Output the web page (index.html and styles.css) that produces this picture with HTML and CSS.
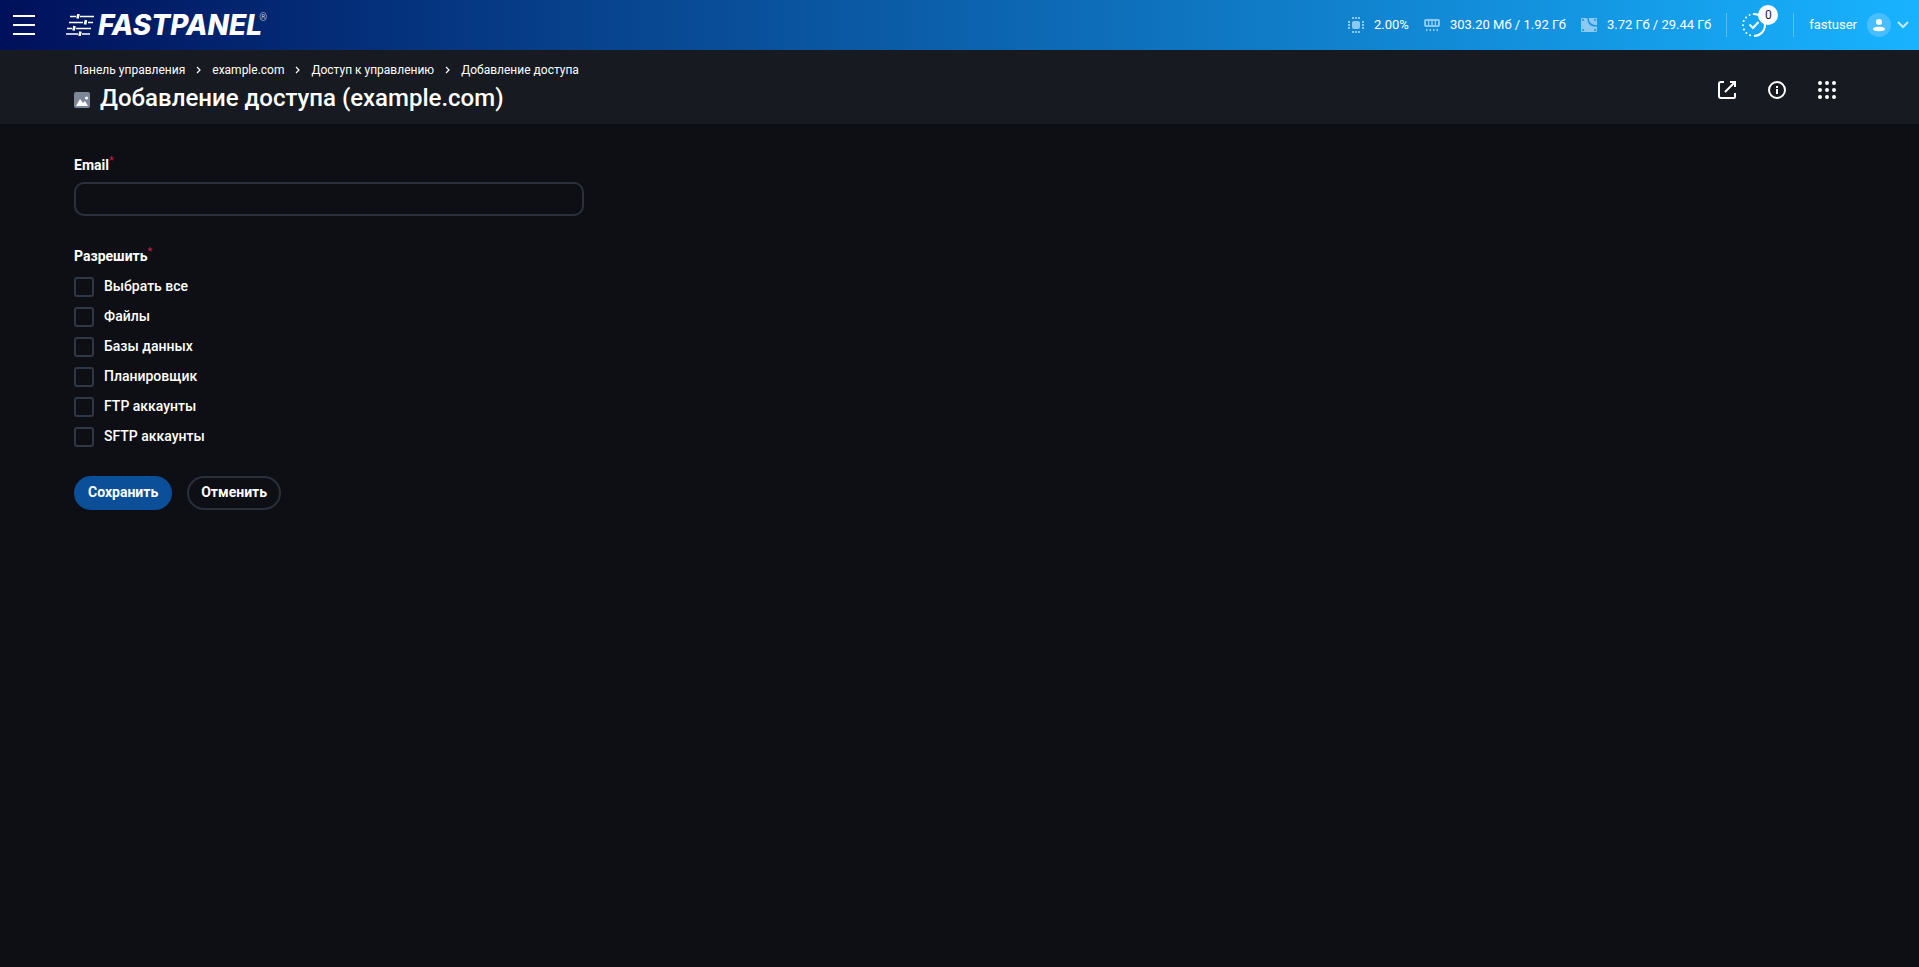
FILE: index.html
```html
<!DOCTYPE html>
<html lang="ru">
<head>
    <meta charset="utf-8">
    <title>Добавление доступа (example.com)</title>
    <link rel="stylesheet" href="styles.css">
</head>
<body>
    <header class="topbar">
        <button class="icon-button" type="button" aria-label="Меню">
            <svg width="22" height="20" viewBox="0 0 22 20" fill="#fff">
                <path d="M0 0h22v2H0zM0 9h22v2H0zM0 18h22v2H0z"/>
            </svg>
        </button>
        <a class="logo" href="#" aria-label="FASTPANEL">
            <svg width="28" height="22" viewBox="0 0 28 22" stroke="#fff" stroke-width="1.6" fill="none">
                <path d="M4 2.5h6M14 2.5h14M3 8.5h14M22 8.5h5M1 14.5h5M10 14.5h15M0 20h12M16 20h8"/>
                <path stroke-width="2.6" d="M12.5 0l-1 4.500M20 6l-1 4.500M8.500 12l-1 4.500M14.500 17.500l-1 4.500"/>
            </svg>
            <span class="logo-text">FASTPANEL</span>
            <span class="logo-reg">®</span>
        </a>

        <div class="stats">
            <div class="stat">
                <svg width="16" height="16" viewBox="0 0 16 16" fill="#8ac9f1">
                    <rect x="4" y="4" width="8" height="8" rx="2"/>
                    <path d="M4 0h2v2H4zM7 0h2v2H7zM10 0h2v2h-2zM4 14h2v2H4zM7 14h2v2H7zM10 14h2v2h-2zM0 4h2v2H0zM0 7h2v2H0zM0 10h2v2H0zM14 4h2v2h-2zM14 7h2v2h-2zM14 10h2v2h-2z"/>
                </svg>
                <span>2.00%</span>
            </div>
            <div class="stat">
                <svg width="16" height="16" viewBox="0 0 16 16" fill="#8ac9f1">
                    <path fill-rule="evenodd" d="M2 2h12a2 2 0 0 1 2 2v4a2 2 0 0 1-2 2H2a2 2 0 0 1-2-2V4a2 2 0 0 1 2-2zM2 4v4h2V4zM5.300 4v4h2V4zM8.700 4v4h2V4zM12 4v4h2V4z"/>
                    <path d="M2 12h1.500v2H2zM5.500 12H7v2H5.500zM9 12h1.500v2H9zM12.500 12H14v2h-1.500z"/>
                </svg>
                <span>303.20 Мб / 1.92 Гб</span>
            </div>
            <div class="stat">
                <svg width="16" height="16" viewBox="0 0 16 16">
                    <rect y="1" width="16" height="14" rx="1" fill="#8ac9f1"/>
                    <path d="M7 1c0 5 3 8 9 8" fill="none" stroke="#1595e0" stroke-width="1.5"/>
                    <g fill="#1595e0">
                        <circle cx="2" cy="3" r="1"/>
                        <circle cx="14" cy="3" r="1"/>
                        <circle cx="2" cy="13" r="1"/>
                        <circle cx="14" cy="13" r="1"/>
                    </g>
                </svg>
                <span>3.72 Гб / 29.44 Гб</span>
            </div>
        </div>

        <button class="icon-button tasks" type="button" aria-label="Задачи">
            <svg width="24" height="24" viewBox="0 0 24 24" fill="none" stroke="#fff" stroke-width="2">
                <path d="M12 1a11 11 0 0 1 0 22"/>
                <path d="M12 23A11 11 0 0 1 12 1" stroke-linecap="round" stroke-dasharray="0 4.3" stroke-dashoffset="-4"/>
                <path d="M7.500 11.500l3.500 3.500 5.500-6"/>
            </svg>
            <span class="tasks-count">0</span>
        </button>

        <button class="icon-button user" type="button">
            <span>fastuser</span>
            <svg width="24" height="24" viewBox="0 0 24 24">
                <circle cx="12" cy="12" r="12" fill="#46beff"/>
                <circle cx="12" cy="9" r="3" fill="#fff"/>
                <path d="M6 16c0-3 12-3 12 0 0 3-12 3-12 0z" fill="#fff"/>
            </svg>
            <svg class="chevron" width="12" height="8" viewBox="0 0 12 8" fill="none" stroke="#c5eaff" stroke-width="2">
                <path d="M1 1l5 5 5-5"/>
            </svg>
        </button>
    </header>

    <section class="page-header">
        <div>
            <nav class="breadcrumbs" aria-label="Навигация">
                <a href="#">Панель управления</a>
                <svg width="5" height="8" viewBox="0 0 5 8"><path d="M1 1l3 3-3 3"/></svg>
                <a href="#">example.com</a>
                <svg width="5" height="8" viewBox="0 0 5 8"><path d="M1 1l3 3-3 3"/></svg>
                <a href="#">Доступ к управлению</a>
                <svg width="5" height="8" viewBox="0 0 5 8"><path d="M1 1l3 3-3 3"/></svg>
                <a href="#">Добавление доступа</a>
            </nav>
            <div class="title-row">
                <svg width="16" height="16" viewBox="0 0 16 16">
                    <rect width="16" height="16" rx="2" fill="#7d8798"/>
                    <path d="M2 14l4-7 3 4 2-2 3 5z" fill="#fff"/>
                    <circle cx="12.500" cy="6" r="1.500" fill="#fff"/>
                </svg>
                <h1>Добавление доступа (example.com)</h1>
            </div>
        </div>
        <div class="page-actions">
            <button class="icon-button" type="button" aria-label="Открыть сайт">
                <svg width="20" height="20" viewBox="0 0 20 20" fill="none" stroke="#fff" stroke-width="2">
                    <path d="M7 2H4a2 2 0 0 0-2 2v12a2 2 0 0 0 2 2h13a1 1 0 0 0 1-1v-4M8 12l9-9M13 2h5v5"/>
                </svg>
            </button>
            <button class="icon-button" type="button" aria-label="Информация">
                <svg width="20" height="20" viewBox="0 0 20 20" fill="none" stroke="#fff" stroke-width="2">
                    <circle cx="10" cy="10" r="8"/>
                    <path d="M10 9v5M10 6v2"/>
                </svg>
            </button>
            <button class="icon-button" type="button" aria-label="Приложения">
                <svg width="20" height="20" viewBox="0 0 20 20" fill="none" stroke="#fff" stroke-width="4" stroke-linecap="round">
                    <path d="M3 3h0M10 3h0M17 3h0M3 10h0M10 10h0M17 10h0M3 17h0M10 17h0M17 17h0"/>
                </svg>
            </button>
        </div>
    </section>

    <main>
        <form class="access-form">
            <label class="field-label" for="email">Email<span class="required">*</span></label>
            <input class="text-input" type="email" id="email">

            <fieldset class="permissions">
                <legend class="field-label">Разрешить<span class="required">*</span></legend>
                <label class="check"><input type="checkbox"><span>Выбрать все</span></label>
                <label class="check"><input type="checkbox"><span>Файлы</span></label>
                <label class="check"><input type="checkbox"><span>Базы данных</span></label>
                <label class="check"><input type="checkbox"><span>Планировщик</span></label>
                <label class="check"><input type="checkbox"><span>FTP аккаунты</span></label>
                <label class="check"><input type="checkbox"><span>SFTP аккаунты</span></label>
            </fieldset>

            <div class="form-actions">
                <button class="btn btn-primary" type="submit">Сохранить</button>
                <button class="btn btn-outline" type="button">Отменить</button>
            </div>
        </form>
    </main>
</body>
</html>
```
FILE: styles.css
```css
* {
    box-sizing: border-box;
}

body {
    margin: 0;
    min-height: 100vh;
    background: #0e0f14;
    color: #fff;
    font-family: Roboto, sans-serif;
    font-size: 14px;
    font-weight: 500;
    line-height: 20px;
}

a {
    color: inherit;
    text-decoration: none;
}

svg {
    display: block;
    flex-shrink: 0;
}

button,
input {
    font: inherit;
    color: inherit;
}

.icon-button {
    display: flex;
    align-items: center;
    padding: 0;
    border: none;
    background: none;
    cursor: pointer;
}

/* top bar */
.topbar {
    display: flex;
    align-items: center;
    height: 50px;
    padding: 0 10px 0 13px;
    background: linear-gradient(90deg, #00105b 0%, #18b3ff 100%);
}

.logo {
    display: flex;
    align-items: center;
    margin-left: 31px;
}

.logo-text {
    margin-left: 4px;
    font-family: Inter, sans-serif;
    font-size: 28px;
    font-style: italic;
    font-weight: 800;
    line-height: 28px;
}

.logo-reg {
    align-self: flex-start;
    margin-left: -3px;
    color: #b5bfdc;
    font-size: 10px;
    font-weight: 400;
    line-height: 14px;
}

.stats {
    display: flex;
    gap: 15px;
    margin-left: auto;
    font-size: 13px;
    font-weight: 400;
}

.stat {
    display: flex;
    align-items: center;
    gap: 10px;
}

.tasks {
    position: relative;
    height: 24px;
    margin-left: 15px;
    padding: 0 27px 0 15px;
    border: 1px solid #58c1f7;
    border-width: 0 1px;
}

.tasks-count {
    position: absolute;
    top: -8px;
    left: 31px;
    width: 20px;
    height: 20px;
    border-radius: 50%;
    background: #fff;
    color: #1b1c3c;
    font-size: 12px;
    font-weight: 400;
    text-align: center;
}

.user {
    gap: 10px;
    padding-left: 15px;
    font-size: 13px;
    font-weight: 400;
}

.chevron {
    margin-left: -4px;
}

/* page header */
.page-header {
    display: flex;
    justify-content: space-between;
    padding: 10px 82px 9px 74px;
    background: #171a21;
}

.breadcrumbs {
    display: flex;
    align-items: center;
    gap: 11px;
    font-size: 12px;
    font-weight: 400;
}

.breadcrumbs svg {
    fill: none;
    stroke: #fff;
    stroke-width: 1.2;
}

.title-row {
    display: flex;
    align-items: flex-end;
    gap: 10px;
    margin-top: 1px;
}

.title-row svg {
    margin-bottom: 7px;
}

h1 {
    margin: 0;
    font-size: 24px;
    font-weight: 500;
    line-height: 34px;
}

.page-actions {
    display: flex;
    align-items: flex-start;
    gap: 30px;
    padding-top: 20px;
}

/* form */
main {
    padding: 31px 74px;
}

.access-form {
    max-width: 510px;
}

.field-label {
    display: block;
    padding: 0;
    font-weight: 700;
}

.required {
    color: #d8163c;
    font-size: 11px;
    font-weight: 400;
    line-height: 0;
    vertical-align: super;
}

.text-input {
    display: block;
    width: 100%;
    height: 34px;
    margin-top: 7px;
    padding: 0 12px;
    border: 2px solid #2a313c;
    border-radius: 10px;
    background: transparent;
}

.permissions {
    margin: 30px 0 0;
    padding: 0;
    border: none;
}

.check {
    display: flex;
    align-items: flex-end;
    gap: 10px;
    margin-top: 10px;
}

.check span {
    padding-bottom: 1px;
}

.check input {
    appearance: none;
    width: 20px;
    height: 20px;
    margin: 0;
    border: 2px solid #303744;
    border-radius: 3px;
}

.check input:checked {
    background: #0a4f98;
}

.check + .check {
    margin-top: 9px;
}

.form-actions {
    display: flex;
    gap: 15px;
    margin-top: 29px;
}

.btn {
    height: 34px;
    padding: 0 12px 2px;
    border: 2px solid #0a4f98;
    border-radius: 17px;
    font-weight: 700;
    cursor: pointer;
}

.btn-primary {
    background: #0a4f98;
}

.btn-outline {
    border-color: #2a2f3a;
    background: transparent;
}
```
